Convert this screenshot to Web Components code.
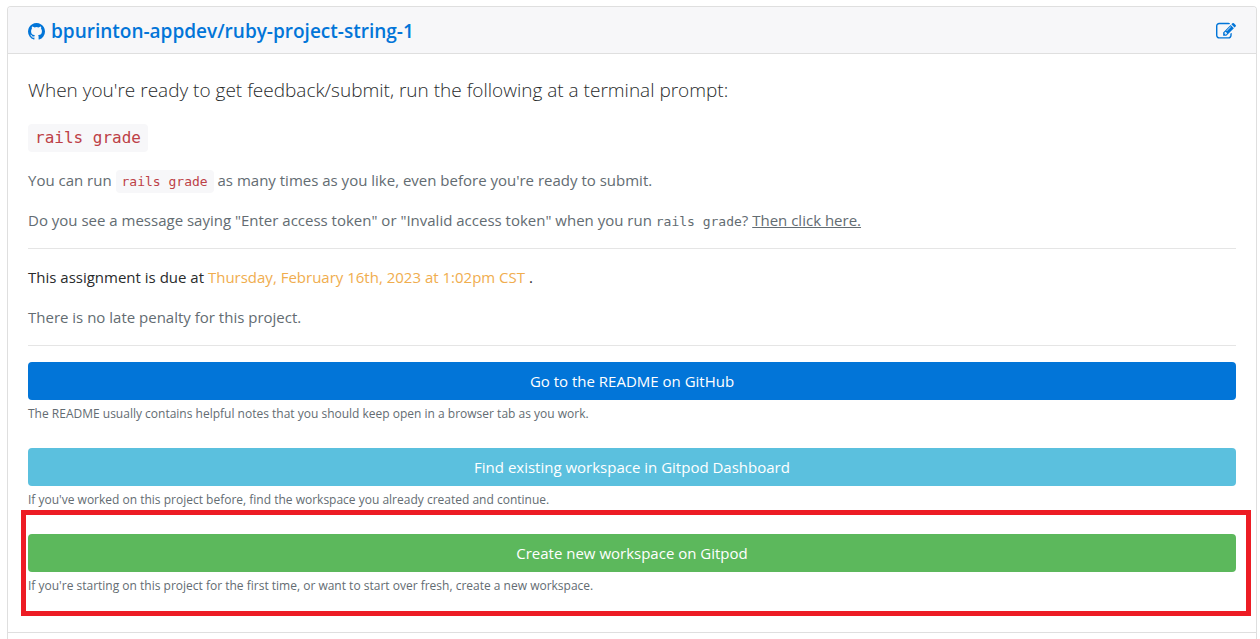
<!DOCTYPE html>
<html lang="en">
<head>
<meta charset="utf-8">
<meta name="viewport" content="width=device-width, initial-scale=1">
<title>ruby-project-string-1</title>
<style>
  * { box-sizing: border-box; }
  body {
    margin: 0;
    background: #fff;
    color: #292b2c;
    font: 15px/24px "Open Sans", "Noto Sans", sans-serif;
    --muted: #636c72;
    --blue: #0275d8;
    --line: #dfdfdf;
    --mono: "DejaVu Sans Mono", "Liberation Mono", monospace;
  }
</style>
</head>
<body>
<assignment-page></assignment-page>

<template id="project-card">
  <style>
    * { box-sizing: border-box; }
    :host {
      display: flex;
      flex-direction: column;
      flex: 1;
      border: 1px solid var(--line);
      border-bottom: 0;
      border-radius: 4px 4px 0 0;
    }
    header {
      display: flex;
      align-items: flex-start;
      justify-content: space-between;
      padding: 12px 20px 10px;
      background: #f7f7f9;
      border-bottom: 1px solid var(--line);
      border-radius: 3px 3px 0 0;
    }
    main { padding: 20px 20px 12px; }
    footer { flex: 1; border-top: 1px solid var(--line); }
  </style>
  <header><slot name="title"></slot><slot name="tools"></slot></header>
  <main><slot></slot></main>
  <footer></footer>
</template>

<template id="repo-link">
  <style>
    :host { display: block; }
    h1 { margin: 0; font-size: 19px; line-height: 24px; font-weight: 600; }
    a { display: flex; align-items: center; gap: 6px; color: var(--blue); text-decoration: none; }
    svg { width: 17px; height: 17px; fill: currentColor; }
  </style>
  <h1><a href="#repository">
    <svg viewBox="0 0 1536 1536" aria-hidden="true"><path d="M768 0q209 0 385.500 103t279.500 279.500 103 385.500q0 251-146.500 451.500t-378.500 277.500q-27 5-40-7t-13-30q0-3 .5-76.500t.5-134.500q0-97-52-142 57-6 102.500-18t94-39 81-66.500 53-105 20.500-150.500q0-119-79-206 37-91-8-204-28-9-81 11t-92 44l-38 24q-93-26-192-26t-192 26q-16-11-42.500-27t-83.500-38.500-85-13.500q-45 113-8 204-79 87-79 206 0 85 20.500 150t52.500 105 80.500 67 94 39 102.500 18q-39 36-49 103-21 10-45 15t-57 5-65.500-21.500-55.500-62.500q-19-32-48.500-52t-49.500-24l-20-3q-21 0-29 4.500t-5 11.500 9 14 13 12l7 5q22 10 43.500 38t31.500 51l10 23q13 38 44 61.500t67 30 69.500 7 55.500-3.500l23-4q0 38 .5 88.500t.5 54.500q0 18-13 30t-40 7q-232-77-378.500-277.500t-146.500-451.500q0-209 103-385.500t279.500-279.500 385.500-103z"/></svg>
    <span><slot></slot></span></a></h1>
</template>

<template id="edit-link">
  <style>
    :host { display: flex; }
    a { display: flex; align-items: center; height: 22px; color: var(--blue); }
    svg { width: 20px; height: 18px; fill: currentColor; }
  </style>
  <a href="#edit" aria-label="Edit project">
    <svg viewBox="0 0 1792 1536" aria-hidden="true"><path d="M888 1184l116-116-152-152-116 116v56h96v96h56zm440-720q-16-16-33 1l-350 350q-17 17-1 33t33-1l350-350q17-17 1-33zm80 594v190q0 119-84.500 203.500t-203.500 84.500h-832q-119 0-203.500-84.500t-84.500-203.500v-832q0-119 84.500-203.500t203.500-84.500h832q63 0 117 25 15 7 18 23 3 17-9 29l-49 49q-14 14-32 8-23-6-45-6h-832q-66 0-113 47t-47 113v832q0 66 47 113t113 47h832q66 0 113-47t47-113v-126q0-13 9-22l64-64q15-15 35-7t20 29zm-96-738l288 288-672 672h-288v-288zm444 132l-92 92-288-288 92-92q28-28 68-28t68 28l152 152q28 28 28 68t-28 68z"/></svg>
  </a>
</template>

<template id="code-snippet"><style>
    :host { display: inline; }
    code { font: 13px/16px var(--mono); }
    :host([tone="chip"]) code, :host([tone="large"]) code {
      padding: 4px 6px;
      color: #bd4147;
      background: #f7f7f9;
      border-radius: 4px;
    }
    :host([tone="large"]) code {
      display: inline-block;
      padding: 2px 7px;
      font-size: 16px;
      line-height: 24px;
    }
  </style><code><slot></slot></code></template>

<template id="action-link">
  <style>
    * { box-sizing: border-box; }
    :host { display: block; position: relative; margin-bottom: 24px; }
    a {
      display: block;
      padding: 7px 16px;
      border-radius: 4px;
      background: var(--blue);
      color: #fff;
      text-align: center;
      text-decoration: none;
    }
    :host([kind="info"]) a { background: #5bc0de; }
    :host([kind="success"]) a { background: #5cb85c; }
    p { margin: 4px 0 0; font-size: 12px; line-height: 20px; color: var(--muted); }
    :host([marked])::after {
      content: "";
      position: absolute;
      inset: -24px -15px -20px -7px;
      border: 5px solid #ed1c24;
      pointer-events: none;
    }
  </style>
  <a href="#open"><slot></slot></a>
  <p><slot name="hint"></slot></p>
</template>

<template id="assignment-page">
  <style>
    * { box-sizing: border-box; }
    :host { display: flex; min-height: 100vh; padding: 6px 3px 0 7px; }
    p { margin: 0 0 16px; }
    .lead { font-size: 19px; line-height: 32px; font-weight: 300; }
    .command { line-height: 30px; }
    .muted { color: var(--muted); }
    .muted a { color: inherit; }
    .due { color: #f0ad4e; }
    hr { margin: 16px 0; border: 0; border-top: 1px solid #e5e5e5; }
  </style>
  <project-card>
    <repo-link slot="title">bpurinton-appdev/ruby-project-string-1</repo-link>
    <edit-link slot="tools"></edit-link>
    <p class="lead">When you're ready to get feedback/submit, run the following at a terminal prompt:</p>
    <p class="command"><code-snippet tone="large">rails grade</code-snippet></p>
    <p class="muted">You can run <code-snippet tone="chip">rails grade</code-snippet> as many times as you like, even before you're ready to submit.</p>
    <p class="muted">Do you see a message saying "Enter access token" or "Invalid access token" when you run <code-snippet>rails grade</code-snippet>? <a href="#token">Then click here.</a></p>
    <hr>
    <p>This assignment is due at <span class="due">Thursday, February 16th, 2023 at 1:02pm CST</span> .</p>
    <p class="muted">There is no late penalty for this project.</p>
    <hr>
    <action-link>Go to the README on GitHub<span slot="hint">The README usually contains helpful notes that you should keep open in a browser tab as you work.</span></action-link>
    <action-link kind="info">Find existing workspace in Gitpod Dashboard<span slot="hint">If you've worked on this project before, find the workspace you already created and continue.</span></action-link>
    <action-link kind="success" marked>Create new workspace on Gitpod<span slot="hint">If you're starting on this project for the first time, or want to start over fresh, create a new workspace.</span></action-link>
  </project-card>
</template>

<script>
  const define = (name) => customElements.define(name, class extends HTMLElement {
    constructor() {
      super();
      this.attachShadow({ mode: "open" })
        .append(document.getElementById(name).content.cloneNode(true));
    }
  });
  ["project-card", "repo-link", "edit-link", "code-snippet", "action-link", "assignment-page"].forEach(define);
</script>
</body>
</html>
